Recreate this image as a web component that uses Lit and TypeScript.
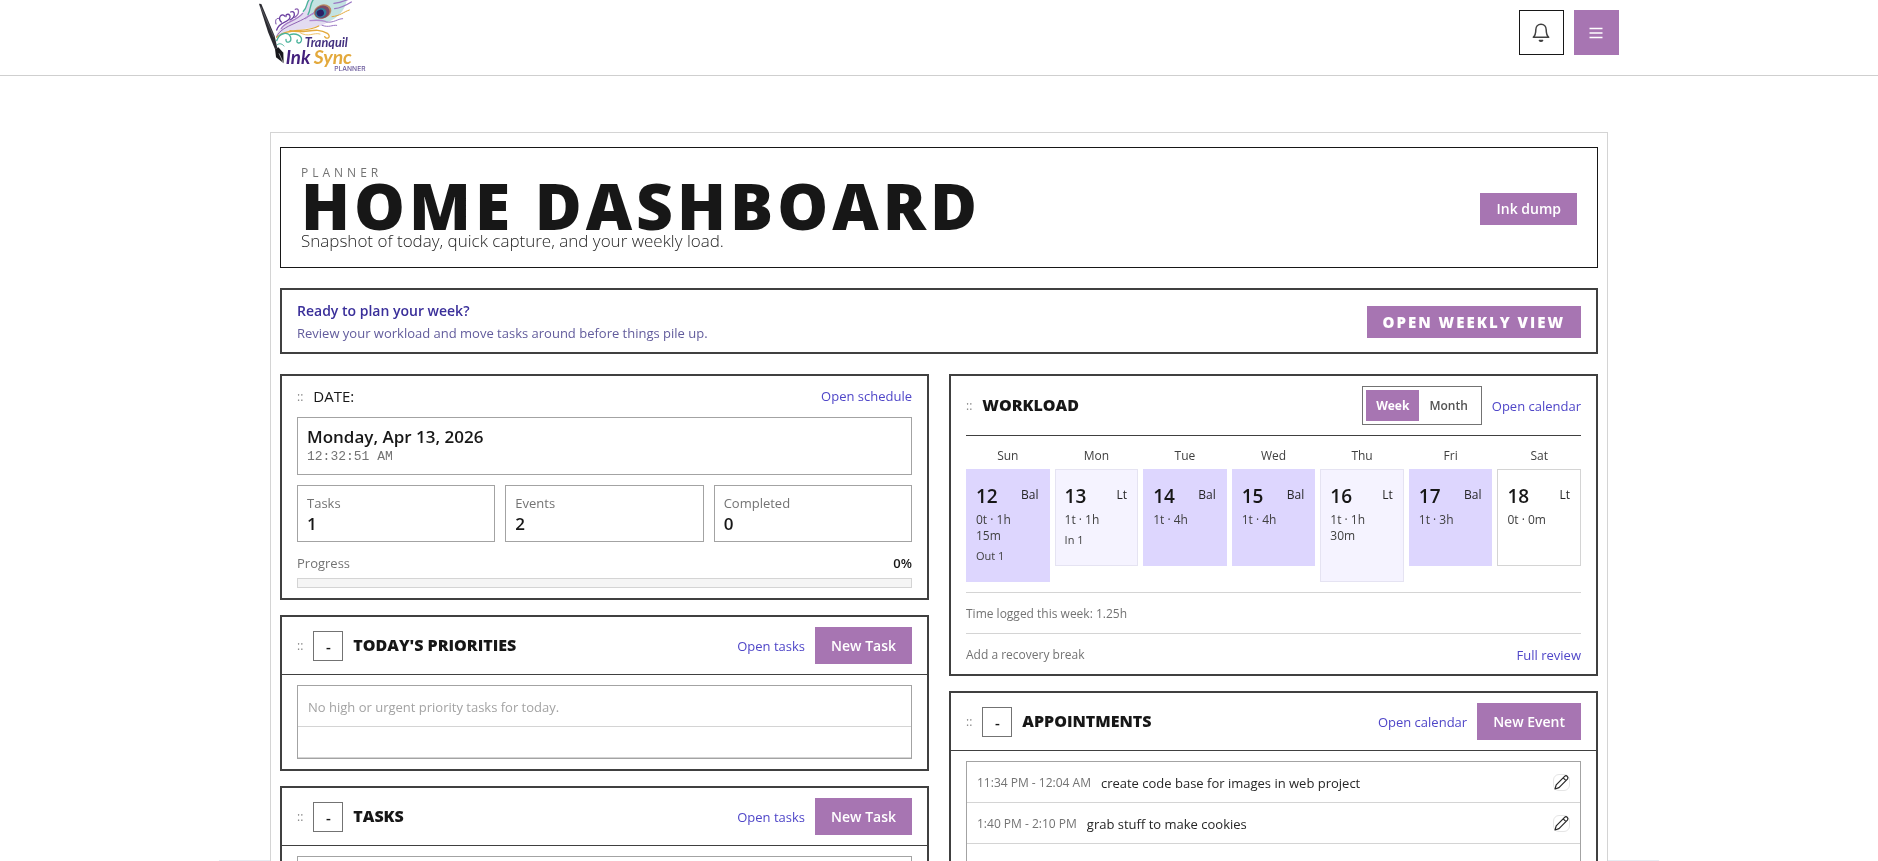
import { LitElement, html, css, svg, nothing } from "lit";
import { customElement, state } from "lit/decorators.js";
import { classMap } from "lit/directives/class-map.js";

interface Day {
  name: string;
  num: number;
  level: "bal" | "lt" | "free";
  tag: string;
  load: string;
  note?: string;
}

const DAYS: Day[] = [
  { name: "Sun", num: 12, level: "bal", tag: "Bal", load: "0t · 1h 15m", note: "Out 1" },
  { name: "Mon", num: 13, level: "lt", tag: "Lt", load: "1t · 1h", note: "In 1" },
  { name: "Tue", num: 14, level: "bal", tag: "Bal", load: "1t · 4h" },
  { name: "Wed", num: 15, level: "bal", tag: "Bal", load: "1t · 4h" },
  { name: "Thu", num: 16, level: "lt", tag: "Lt", load: "1t · 1h 30m" },
  { name: "Fri", num: 17, level: "bal", tag: "Bal", load: "1t · 3h" },
  { name: "Sat", num: 18, level: "free", tag: "Lt", load: "0t · 0m" },
];

const STATS = [
  { label: "Tasks", value: 1 },
  { label: "Events", value: 2 },
  { label: "Completed", value: 0 },
];

const EVENTS = [
  { time: "11:34 PM - 12:04 AM", title: "create code base for images in web project" },
  { time: "1:40 PM - 2:10 PM", title: "grab stuff to make cookies" },
];

@customElement("planner-logo")
export class PlannerLogo extends LitElement {
  static styles = css`
    :host { display: block; }
    svg { display: block; }
    .tranquil { font: italic 700 38px "Lato", sans-serif; fill: #43307f; }
    .ink { font: italic 700 56px "Lato", sans-serif; fill: #43207c; }
    .sync { font: italic 700 58px "Lato", sans-serif; fill: #e3a93c; }
    .sub { font: 500 20px "Inter", sans-serif; fill: #6b5a9c; }
  `;

  render() {
    return html`
      <svg width="110" height="74" viewBox="57 0 330 222" role="img" aria-label="Tranquil InkSync Planner">
        ${svg`
          <g fill="none" stroke-linecap="round">
            <path d="M108 112 C118 66 168 62 190 36 C202 20 196 8 214 -6 L300 -6 C308 30 286 62 240 78 C190 92 132 88 108 112Z" fill="#e3dcf1"/>
            <path d="M222 -6 L320 -6 C322 12 306 46 272 62 C250 70 224 66 214 48 C206 30 214 10 222 -6Z" fill="#c3e3e2"/>
            <path d="M110 110 C126 72 190 72 238 24" stroke="#8f63b4" stroke-width="3"/>
            <path d="M124 86 C132 66 166 66 188 40" stroke="#a77bc6" stroke-width="4"/>
            <path d="M110 90 C118 62 146 70 150 52 C152 40 136 40 138 50" stroke="#6b3fa0" stroke-width="4"/>
            <path d="M124 66 C112 54 124 38 134 48 M150 60 C170 50 164 30 152 36" stroke="#6b3fa0" stroke-width="4"/>
            <path d="M164 52 C182 40 176 22 166 28" stroke="#8f63b4" stroke-width="4"/>
            <path d="M108 72 C104 60 110 52 118 56" stroke="#6b3fa0" stroke-width="3"/>
            <path d="M190 34 C204 20 198 6 210 -4 M204 44 C214 26 208 12 222 -4" stroke="#4bb39b" stroke-width="4"/>
            <path d="M196 56 C206 44 214 44 226 38 M210 62 C226 60 242 60 256 64" stroke="#b18ad0" stroke-width="4"/>
            <path d="M282 10 C298 8 312 4 330 -4 M284 26 C304 24 318 16 334 6" stroke="#9a78c4" stroke-width="4"/>
            <path d="M276 50 C300 48 310 36 328 30" stroke="#e3a93c" stroke-width="3"/>
            <path d="M258 66 C282 70 292 56 308 56 M246 76 C268 84 276 74 290 76" stroke="#9a78c4" stroke-width="3"/>
            <path d="M276 -4 C296 0 306 0 318 -6" stroke="#4bb39b" stroke-width="4"/>
            <path d="M110 112 C140 82 200 100 236 78" stroke="#e3a93c" stroke-width="4"/>
            <path d="M150 92 C196 104 226 78 262 100 C276 112 260 120 254 110" stroke="#e3a93c" stroke-width="4"/>
            <path d="M180 98 C206 114 220 96 240 102" stroke="#efc36a" stroke-width="3"/>
            <path d="M110 122 C120 94 146 96 152 112 C156 128 136 132 138 118" stroke="#4bb39b" stroke-width="4"/>
            <path d="M150 104 C168 98 188 108 184 122 C180 134 166 128 172 120" stroke="#4bb39b" stroke-width="4"/>
            <path d="M112 134 C118 128 128 132 132 138" stroke="#4bb39b" stroke-width="3"/>
          </g>
          <g transform="rotate(-20 244 36)">
            <ellipse cx="248" cy="36" rx="27" ry="21" fill="#b98a62"/>
            <ellipse cx="246" cy="37" rx="23" ry="19" fill="#7b4a66"/>
            <ellipse cx="242" cy="38" rx="17" ry="14" fill="#2f7ea0"/>
            <ellipse cx="240" cy="38" rx="11" ry="10" fill="#2b1f63"/>
          </g>
          <path d="M57 11 L64 12 L104 108 L112 144 L105 148 L84 96Z" fill="#2a2a30"/>
          <path d="M62 20 L102 112" stroke="#6c6c74" stroke-width="2"/>
          <path d="M105 148 L115 142 L130 158 L131 190 L108 172Z" fill="#17171b"/>
          <path d="M117 160 L130 189" stroke="#d8d8dc" stroke-width="2"/>
          <text class="tranquil" x="194" y="140">Tranquil</text>
          <text class="ink" x="137" y="192">Ink</text>
          <text class="sync" x="221" y="192">Sync</text>
          <text class="sub" x="283" y="214">PLANNER</text>
        `}
      </svg>
    `;
  }
}

@customElement("app-root")
export class AppRoot extends LitElement {
  @state() private range: "week" | "month" = "week";
  @state() private closed = new Set<string>();

  static styles = css`
    :host {
      display: block;
      position: relative;
      isolation: isolate;
      height: 100vh;
      overflow-y: auto;
      scrollbar-width: none;
      background: #fff;
      color: #171717;
      font-family: "Open Sans", "Noto Sans", sans-serif;
      font-size: 13px;
      line-height: 18px;
      --accent: #a775b2;
      --ink: #404040;
      --mute: #737373;
      --line: #d4d4d4;
      --box: #a3a3a3;
    }
    * { box-sizing: border-box; }
    h1, h2, p, ul { margin: 0; padding: 0; }
    ul { list-style: none; }
    button { font-family: inherit; cursor: pointer; border-radius: 0; }
    a { color: #4f46c8; text-decoration: none; }

    .topbar { border-bottom: 1px solid #cfcfcf; background: #fff; }
    .topbar-inner {
      max-width: 1360px;
      height: 75px;
      margin: 0 auto;
      display: flex;
      justify-content: space-between;
      align-items: flex-start;
    }
    .top-actions { display: flex; gap: 10px; padding-top: 10px; }
    .icon-btn {
      width: 45px;
      height: 45px;
      padding: 0;
      display: grid;
      place-items: center;
      background: #fff;
      border: 1px solid #171717;
      color: var(--ink);
    }
    .icon-btn.filled { background: var(--accent); border-color: var(--accent); color: #fff; }

    .shell {
      max-width: 1338px;
      margin: 56px auto 40px;
      padding: 14px 9px;
      border: 1px solid var(--line);
      background: #fff;
      display: flex;
      flex-direction: column;
      gap: 20px;
    }
    .hero {
      display: flex;
      align-items: center;
      justify-content: space-between;
      padding: 17px 20px 15px;
      border: 1px solid #171717;
    }
    .eyebrow { font-size: 12px; line-height: 16px; letter-spacing: 4px; color: var(--mute); }
    .hero h1 {
      font-size: 64px;
      line-height: 49px;
      font-weight: 800;
      letter-spacing: 4px;
    }
    .hero .lead { font-size: 17px; line-height: 22px; font-weight: 300; color: #262626; }

    .primary {
      border: 0;
      background: var(--accent);
      color: #fff;
      font-size: 14px;
      line-height: 20px;
      font-weight: 600;
      padding: 6px 16px;
    }
    .primary.tall { line-height: 21px; padding: 8px 16px; }
    .primary.wide { font-size: 15px; font-weight: 800; letter-spacing: 2px; }

    .banner {
      display: flex;
      align-items: center;
      justify-content: space-between;
      padding: 10px 15px 8px;
      border: 2px solid var(--ink);
    }
    .banner p { line-height: 22px; color: #625c9c; }
    .banner .ask { font-size: 14px; font-weight: 600; color: #3a2f9a; }

    .columns { display: grid; grid-template-columns: 1fr 1fr; gap: 20px; align-items: start; }
    .column { display: flex; flex-direction: column; gap: 15px; }
    .card { border: 2px solid var(--ink); background: #fff; }
    .padded { padding: 10px 15px; }
    .card-head {
      display: flex;
      align-items: center;
      gap: 10px;
      padding: 10px 15px;
      border-bottom: 1px solid var(--ink);
    }
    .card-head.flat { padding: 0 0 10px; border-bottom: 0; line-height: 21px; }
    .card-head.inset { padding: 0 0 10px; }
    .card-head h2 { flex: 1; font-size: 16px; font-weight: 800; line-height: 21px; }
    .card-head.flat h2 { font-size: 15px; font-weight: 500; }
    .grip { font-size: 12px; color: #8a8a8a; cursor: grab; }
    .fold {
      width: 30px;
      height: 30px;
      padding: 0;
      background: #fff;
      border: 1px solid var(--mute);
      color: #171717;
      font-size: 15px;
      font-weight: 600;
    }

    .now { border: 1px solid var(--box); padding: 8px 9px; }
    .now .day { font-size: 17px; line-height: 22px; font-weight: 600; }
    .now .clock {
      font-family: "Liberation Mono", monospace;
      font-size: 13px;
      line-height: 18px;
      color: var(--mute);
    }
    .stats { display: grid; grid-template-columns: repeat(3, 1fr); gap: 10px; margin: 10px 0; }
    .stat { border: 1px solid var(--box); padding: 8px 9px 5px; color: var(--mute); }
    .stat strong { display: block; font-size: 17px; line-height: 24px; font-weight: 600; color: #171717; }
    .progress-row { display: flex; justify-content: space-between; line-height: 22px; color: var(--mute); }
    .progress-row .pct { font-weight: 600; color: #171717; }
    progress {
      appearance: none;
      display: block;
      width: 100%;
      height: 10px;
      margin-top: 4px;
      border: 1px solid var(--line);
      background: #f5f5f5;
    }
    progress::-webkit-progress-bar { background: #f5f5f5; }
    progress::-webkit-progress-value { background: var(--accent); }

    .list-wrap { padding: 10px 15px; }
    .list { border: 1px solid var(--box); }
    .row {
      display: flex;
      align-items: center;
      gap: 10px;
      height: 41px;
      padding: 1px 10px 0;
      border-bottom: 1px solid var(--line);
    }
    .row.blank { height: 31px; }
    .row.empty { color: var(--box); }
    .row .time { font-size: 12px; color: var(--mute); }
    .row .title { flex: 1; color: #262626; }
    .edit {
      width: 17px;
      height: 17px;
      padding: 0;
      display: grid;
      place-items: center;
      background: #fff;
      border: 1px solid #e5e5e5;
      border-radius: 6px;
      color: #262626;
    }
    .edit svg { overflow: visible; }

    .switch { display: flex; padding: 3px; border: 1px solid var(--mute); }
    .switch button {
      height: 31px;
      padding: 0 10px;
      border: 0;
      background: #fff;
      color: #525252;
      font-size: 12px;
      font-weight: 600;
    }
    .switch button.on { background: var(--accent); color: #fff; font-weight: 700; }

    .week {
      display: grid;
      grid-template-columns: repeat(7, 1fr);
      gap: 5px;
      align-items: start;
      padding: 10px 0;
    }
    .week .name { padding-top: 2px; text-align: center; font-size: 12px; line-height: 16px; color: var(--ink); }
    .cell {
      padding: 14px 10px 17px 9px;
      border: 1px solid #ddd6fe;
      background: #ddd6fe;
      font-size: 12px;
      line-height: 16px;
      color: var(--ink);
    }
    .cell.lt { background: #f5f3ff; border-color: #e5e3f2; }
    .cell.free { background: #fff; border-color: var(--line); }
    .cell-top { display: flex; justify-content: space-between; margin-bottom: 4px; color: #262626; }
    .cell-top strong { font-size: 19px; line-height: 24px; font-weight: 600; color: #171717; }
    .cell-top .tag { padding-top: 3px; }
    .cell .note { min-height: 16px; margin-top: 4px; font-size: 11px; }
    .foot {
      display: flex;
      align-items: center;
      justify-content: space-between;
      height: 41px;
      padding-top: 2px;
      border-top: 1px solid var(--line);
      font-size: 12px;
      color: var(--mute);
    }
    .foot a { font-size: 13px; }
    .workload { padding: 10px 15px 0; }

    .dock {
      position: fixed;
      z-index: -1;
      bottom: 0;
      left: 0;
      right: 0;
      max-width: 1440px;
      height: 1px;
      margin: 0 auto;
      background: #e6ecf2;
    }
  `;

  private toggle(id: string) {
    const next = new Set(this.closed);
    next.has(id) ? next.delete(id) : next.add(id);
    this.closed = next;
  }

  private foldHead(id: string, title: string, link: string, action: string) {
    const closed = this.closed.has(id);
    return html`
      <header class="card-head">
        <span class="grip">::</span>
        <button class="fold" aria-label="Collapse ${title}" aria-expanded=${!closed} @click=${() => this.toggle(id)}>
          ${closed ? "+" : "-"}
        </button>
        <h2>${title}</h2>
        <a href="#">${link}</a>
        <button class="primary tall">${action}</button>
      </header>
    `;
  }

  private dateCard() {
    return html`
      <section class="card padded">
        <header class="card-head flat">
          <span class="grip">::</span>
          <h2>DATE:</h2>
          <a href="#">Open schedule</a>
        </header>
        <div class="now">
          <p class="day">Monday, Apr 13, 2026</p>
          <p class="clock">12:32:51 AM</p>
        </div>
        <div class="stats">
          ${STATS.map((s) => html`<div class="stat">${s.label}<strong>${s.value}</strong></div>`)}
        </div>
        <div class="progress-row">
          <label for="done">Progress</label>
          <span class="pct">0%</span>
        </div>
        <progress id="done" max="100" value="0"></progress>
      </section>
    `;
  }

  private taskCard(id: string, title: string, empty = "") {
    return html`
      <section class="card">
        ${this.foldHead(id, title, "Open tasks", "New Task")}
        ${this.closed.has(id)
          ? nothing
          : html`<div class="list-wrap">
              <ul class="list">
                <li class="row empty">${empty}</li>
                <li class="row blank"></li>
              </ul>
            </div>`}
      </section>
    `;
  }

  private workloadCard() {
    return html`
      <section class="card workload">
        <header class="card-head inset">
          <span class="grip">::</span>
          <h2>WORKLOAD</h2>
          <div class="switch">
            <button class=${classMap({ on: this.range === "week" })} @click=${() => (this.range = "week")}>Week</button>
            <button class=${classMap({ on: this.range === "month" })} @click=${() => (this.range = "month")}>Month</button>
          </div>
          <a href="#">Open calendar</a>
        </header>
        <div class="week">
          ${DAYS.map((d) => html`<span class="name">${d.name}</span>`)}
          ${DAYS.map(
            (d) => html`
              <div class=${classMap({ cell: true, [d.level]: true })}>
                <div class="cell-top"><strong>${d.num}</strong><span class="tag">${d.tag}</span></div>
                <p>${d.load}</p>
                <p class="note">${d.note ?? nothing}</p>
              </div>
            `
          )}
        </div>
        <div class="foot"><span>Time logged this week: 1.25h</span></div>
        <div class="foot"><span>Add a recovery break</span><a href="#">Full review</a></div>
      </section>
    `;
  }

  private appointmentsCard() {
    return html`
      <section class="card">
        ${this.foldHead("appointments", "APPOINTMENTS", "Open calendar", "New Event")}
        ${this.closed.has("appointments")
          ? nothing
          : html`<div class="list-wrap">
              <ul class="list">
                ${EVENTS.map(
                  (e) => html`
                    <li class="row">
                      <span class="time">${e.time}</span>
                      <span class="title">${e.title}</span>
                      <button class="edit" aria-label="Edit ${e.title}">
                        <svg width="15" height="15" viewBox="0 0 15 15" fill="none" stroke="currentColor" stroke-width="1.2" stroke-linejoin="round">
                          <path d="M1 14 L2.2 9.8 L10.6 1.4 C12.4 -0.4 15 2.2 13.4 4.1 L5 12.6 Z M9.2 2.8 L12 5.6" />
                        </svg>
                      </button>
                    </li>
                  `
                )}
                <li class="row"></li>
              </ul>
            </div>`}
      </section>
    `;
  }

  render() {
    return html`
      <header class="topbar">
        <div class="topbar-inner">
          <planner-logo></planner-logo>
          <div class="top-actions">
            <button class="icon-btn" aria-label="Notifications">
              <svg width="19" height="20" viewBox="0 0 19 20" fill="none" stroke="currentColor" stroke-width="1.5" stroke-linejoin="round" stroke-linecap="round">
                <path d="M1.3 14.3 C3.2 12.6 3.8 11 3.8 6.8 C3.8 3.4 6 1.2 9 1.2 S14.2 3.4 14.2 6.8 C14.2 11 14.8 12.6 16.7 14.3 Z" />
                <path d="M7.4 17.4 C8 18.6 10 18.6 10.6 17.4 Z" />
              </svg>
            </button>
            <button class="icon-btn filled" aria-label="Menu">
              <svg width="15" height="12" viewBox="0 0 15 12" stroke="currentColor" stroke-width="1.5">
                <path d="M0.5 1.5H13.5M0.5 6H13.5M0.5 10.5H13.5" />
              </svg>
            </button>
          </div>
        </div>
      </header>
      <main class="shell">
        <section class="hero">
          <div>
            <p class="eyebrow">PLANNER</p>
            <h1>HOME DASHBOARD</h1>
            <p class="lead">Snapshot of today, quick capture, and your weekly load.</p>
          </div>
          <button class="primary">Ink dump</button>
        </section>
        <section class="banner">
          <div>
            <p class="ask">Ready to plan your week?</p>
            <p>Review your workload and move tasks around before things pile up.</p>
          </div>
          <button class="primary wide">OPEN WEEKLY VIEW</button>
        </section>
        <div class="columns">
          <div class="column">
            ${this.dateCard()}
            ${this.taskCard("priorities", "TODAY'S PRIORITIES", "No high or urgent priority tasks for today.")}
            ${this.taskCard("tasks", "TASKS")}
          </div>
          <div class="column">${this.workloadCard()} ${this.appointmentsCard()}</div>
        </div>
      </main>
      <div class="dock"></div>
    `;
  }
}
